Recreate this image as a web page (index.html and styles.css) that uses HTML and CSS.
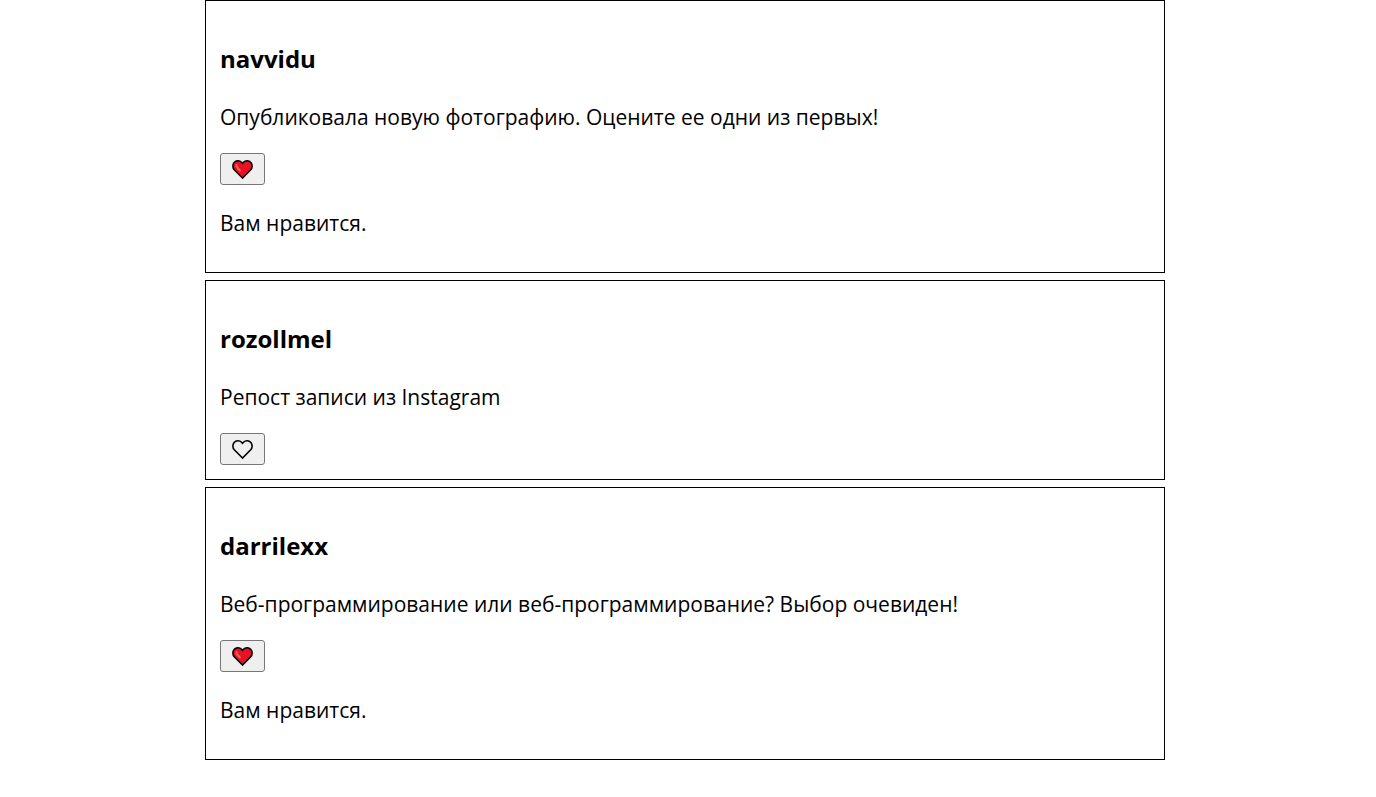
FILE: index.html
```html
<!DOCTYPE html>
<html lang="ru">
<head>
<meta charset="utf-8">
<meta name="viewport" content="width=device-width, initial-scale=1">
<title>Лента</title>
<link rel="stylesheet" href="styles.css">
</head>
<body>
<svg class="sprite" aria-hidden="true">
  <symbol id="heart" viewBox="0 0 24 22">
    <path d="M11.500 20 3.300 11.800C1.500 9.800 1.400 6.500 3.100 4.500 5.100 2.200 8.600 2.200 10.500 4.200L11.500 5.300l1-1.100C14.400 2.200 17.900 2.200 19.900 4.500c1.700 2 1.600 5.300-.2 7.300Z"/>
  </symbol>
</svg>
<main class="feed">
  <article class="post">
    <h3 class="author">navvidu</h3>
    <p class="text">Опубликовала новую фотографию. Оцените ее одни из первых!</p>
    <button class="like liked" type="button" aria-label="Нравится" aria-pressed="true">
      <svg class="icon" viewBox="0 0 24 22"><use href="#heart"/><path class="shine" d="M5.500 7C5.500 9 7 11 9 12.500"/></svg>
    </button>
    <p class="status">Вам нравится.</p>
  </article>
  <article class="post">
    <h3 class="author">rozollmel</h3>
    <p class="text">Репост записи из Instagram</p>
    <button class="like" type="button" aria-label="Нравится" aria-pressed="false">
      <svg class="icon" viewBox="0 0 24 22"><use href="#heart"/></svg>
    </button>
  </article>
  <article class="post">
    <h3 class="author">darrilexx</h3>
    <p class="text">Веб-программирование или веб-программирование? Выбор очевиден!</p>
    <button class="like liked" type="button" aria-label="Нравится" aria-pressed="true">
      <svg class="icon" viewBox="0 0 24 22"><use href="#heart"/><path class="shine" d="M5.500 7C5.500 9 7 11 9 12.500"/></svg>
    </button>
    <p class="status">Вам нравится.</p>
  </article>
</main>
</body>
</html>
```
FILE: styles.css
```css
* {
  box-sizing: border-box;
}

body {
  margin: 0;
  padding-right: 6px;
  background: #fff;
  color: #000;
  font-family: "Open Sans", "Noto Sans", sans-serif;
  font-size: 21px;
  line-height: 28px;
}

.sprite {
  display: none;
}

.feed {
  display: flex;
  flex-direction: column;
  gap: 7px;
  max-width: 960px;
  margin: 0 auto;
}

.post {
  padding: 14px;
  border: 1px solid #000;
}

.author {
  margin: 26px 0;
  font-size: 24px;
  font-weight: 700;
  line-height: 36px;
}

.text {
  margin: 0 0 22px;
}

.status {
  margin: 24px 0 21px;
}

.like {
  display: flex;
  align-items: center;
  justify-content: center;
  width: 45px;
  height: 32px;
  padding: 0;
  border: 1px solid #767676;
  border-radius: 3px;
  background: #efefef;
  cursor: pointer;
}

.icon {
  width: 24px;
  height: 22px;
  fill: none;
  stroke: #000;
  stroke-width: 1.6;
}

.liked .icon {
  fill: #e81224;
}

.icon .shine {
  fill: none;
  stroke: #f0605a;
  stroke-width: 2;
  stroke-linecap: round;
}
```
